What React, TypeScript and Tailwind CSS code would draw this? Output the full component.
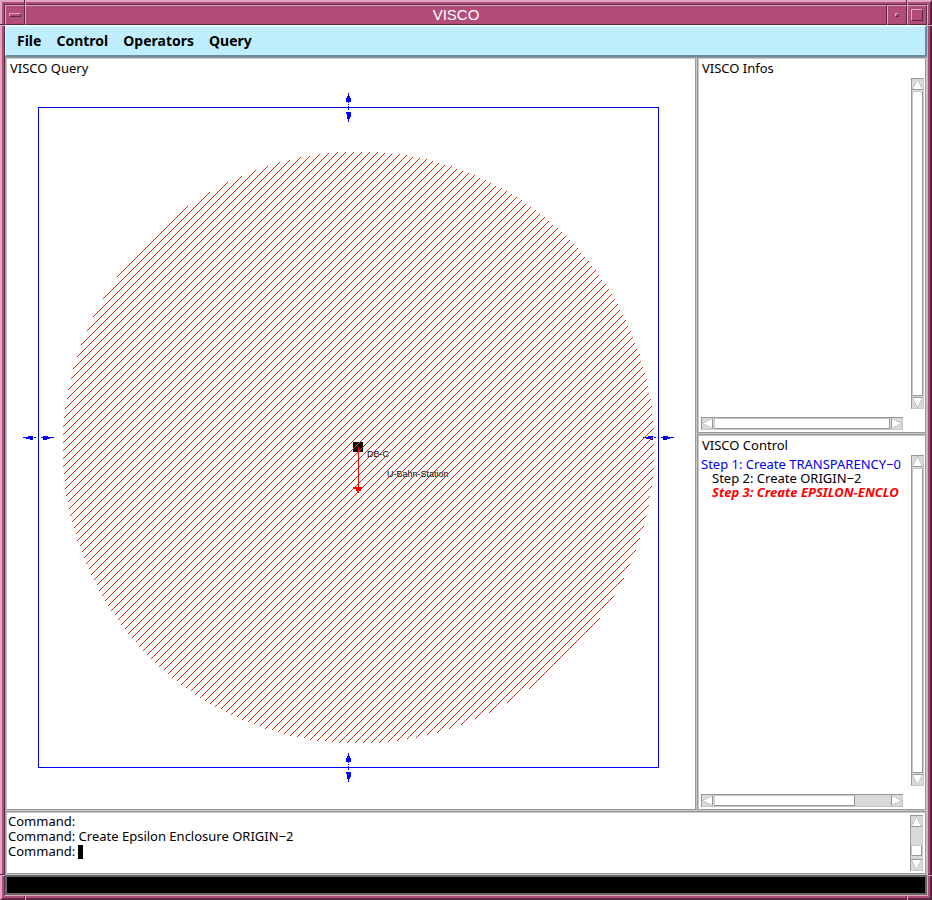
import React from "react";

type ThumbRange = { before: string; size: string };

function Arrow({ dir, label }: { dir: "up" | "down" | "left" | "right"; label: string }) {
  const rotate = { up: "", down: "rotate-180", left: "-rotate-90", right: "rotate-90" }[dir];
  return (
    <button type="button" aria-label={label} className="block size-[11px] shrink-0">
      <svg width="11" height="11" viewBox="0 0 11 11" className={rotate}>
        <path d="M5.5 0.5 L10.5 10.5 H0.5 Z" fill="#ffffff" stroke="#a3a3a3" strokeWidth="1" strokeDasharray="1 1" />
        <path d="M0.5 10.5 H10.5" stroke="#979797" />
      </svg>
    </button>
  );
}

function Scrollbar({ axis, label, thumb }: { axis: "x" | "y"; label: string; thumb: ThumbRange }) {
  const vertical = axis === "y";
  return (
    <div
      aria-label={label}
      className={`flex shrink-0 gap-px border border-t-[#979797] border-l-[#979797] border-r-[#c8c8c8] border-b-[#c8c8c8] bg-[#d9d9d9] ${
        vertical ? "w-[13px] flex-col" : "h-[13px] flex-row"
      }`}
    >
      <Arrow dir={vertical ? "up" : "left"} label={vertical ? "Scroll up" : "Scroll left"} />
      <div className={`flex min-h-0 min-w-0 flex-1 ${vertical ? "flex-col" : "flex-row"}`}>
        <div className={thumb.before} />
        <div
          className={`border border-t-[#c8c8c8] border-l-[#c8c8c8] border-r-[#979797] border-b-[#979797] bg-white ${thumb.size}`}
        />
      </div>
      <Arrow dir={vertical ? "down" : "right"} label={vertical ? "Scroll down" : "Scroll right"} />
    </div>
  );
}

function Pane({ className, children }: { className: string; children: React.ReactNode }) {
  return (
    <section
      className={`flex min-h-0 min-w-0 border border-t-[#979797] border-l-[#979797] border-r-[#c8c8c8] border-b-[#c8c8c8] ${className}`}
    >
      <div className="relative flex min-h-0 min-w-0 flex-1 flex-col border border-t-[#c8c8c8] border-l-[#c8c8c8] border-r-[#979797] border-b-[#979797] bg-white">
        {children}
      </div>
    </section>
  );
}

function PaneTitle({ children }: { children: React.ReactNode }) {
  return <h2 className="relative h-[19px] shrink-0 pl-[3px] text-[13px] leading-[19px]">{children}</h2>;
}

function SidePane({ title, thumb, children }: { title: string; thumb: ThumbRange; children?: React.ReactNode }) {
  return (
    <Pane className="flex-1">
      <PaneTitle>{title}</PaneTitle>
      <div className="flex min-h-0 flex-1 pr-px pl-[2px]">
        <div className="mr-2 min-w-0 flex-1 overflow-hidden">{children}</div>
        <Scrollbar axis="y" label={`${title} vertical`} thumb={{ before: "", size: "flex-1" }} />
      </div>
      <div className="mt-2 mr-[22px] mb-[2px] ml-[2px]">
        <Scrollbar axis="x" label={`${title} horizontal`} thumb={thumb} />
      </div>
    </Pane>
  );
}

const CX = 351;
const CY = 388;
const R = 295.4;

function hatchPath() {
  const parts: string[] = [];
  const reach = R * Math.SQRT2;
  for (let d = -Math.floor(reach); d <= reach; d += 1) {
    const c = CX + CY + d;
    if (c % 8 !== 7) continue;
    const half = Math.sqrt(Math.max(0, R * R - (d * d) / 2)) / Math.SQRT2;
    const mx = CX + d / 2;
    const x1 = Math.round(mx - half);
    const x2 = Math.round(mx + half);
    parts.push(`M${x1} ${c - x1 + 1}L${x2 + 1} ${c - x2}`);
  }
  return parts.join("");
}

const HATCH = hatchPath();

function VerticalHandle({ x, y }: { x: number; y: number }) {
  return (
    <path
      transform={`translate(${x} ${y})`}
      d="M2 0h1v10h-1zM1 3h3v2h-3zM0 5h5v4h-5zM2 11h1v1h-1zM2 13h1v4h-1zM0 19h5v2h-5zM1 21h4v3h-4zM1 24h3v2h-3zM2 26h1v3h-1z"
    />
  );
}

function HorizontalHandle({ x, y }: { x: number; y: number }) {
  return (
    <path
      transform={`translate(${x} ${y})`}
      d="M0 1h10v1h-10zM5 0h5v1h-5zM3 2h7v1h-7zM7 3h3v1h-3zM11 1h2v1h-2zM18 1h13v1h-13zM20 0h5v1h-5zM20 2h7v1h-7zM20 3h4v1h-4z"
    />
  );
}

function QueryCanvas() {
  return (
    <svg className="absolute inset-0 h-full w-full" shapeRendering="crispEdges" aria-label="Query drawing">
      <rect x="31.5" y="48.5" width="620" height="660" fill="none" stroke="#0000ee" />
      <g fill="#0000ff">
        <VerticalHandle x={339} y={34} />
        <VerticalHandle x={339} y={694} />
        <HorizontalHandle x={16} y={377} />
        <HorizontalHandle x={636} y={377} />
      </g>
      <rect x="346" y="383" width="10" height="10" fill="#000000" />
      <g fontFamily="'Liberation Sans', Arial, sans-serif" fontSize="9" fill="#000000">
        <text x="360" y="398">DB-C</text>
        <text x="380" y="418">U-Bahn-Station</text>
      </g>
      <path d={HATCH} stroke="#cc3300" fill="none" />
      <path d="M351 388h1v46h-1zM346 428h10v1h-10zM347 429h8v1h-8zM349 430h5v2h-5zM350 432h2v2h-2z" fill="#ff0000" />
    </svg>
  );
}

const MENU = ["File", "Control", "Operators", "Query"];

function FrameMarks() {
  const vertical = "absolute w-[2px] border-l border-l-[#5a2a43] bg-[#dfa8c0]";
  const horizontal = "absolute h-[2px] border-t border-t-[#5a2a43] bg-[#dfa8c0]";
  return (
    <div className="pointer-events-none absolute -inset-[2px]">
      <i className={`${vertical} top-0 left-6 h-[5px]`} />
      <i className={`${vertical} top-0 right-6 h-[5px]`} />
      <i className={`${vertical} bottom-0 left-6 h-[4px]`} />
      <i className={`${vertical} right-6 bottom-0 h-[4px]`} />
      <i className={`${horizontal} top-6 left-0 w-[5px]`} />
      <i className={`${horizontal} top-6 right-0 w-[4px]`} />
      <i className={`${horizontal} bottom-6 left-0 w-[5px]`} />
      <i className={`${horizontal} right-0 bottom-6 w-[4px]`} />
    </div>
  );
}

export default function App() {
  const bevel = "border border-t-[#dfa8c0] border-l-[#dfa8c0] border-r-[#5a2a43] border-b-[#5a2a43]";
  return (
    <div className="relative flex h-screen flex-col border-2 border-t-[#dfa8c0] border-r-[#5a2a43] border-b-[#5a2a43] border-l-[#dfa8c0] bg-[#b24d7a] p-[2px] font-['Noto_Sans',sans-serif] text-black">
      <div className="flex min-h-0 flex-1 flex-col border border-t-[#5a2a43] border-r-[#dfa8c0] border-b-[#dfa8c0] border-l-[#5a2a43]">
        <header className="flex h-5 shrink-0">
          <button type="button" aria-label="Window menu" className={`flex w-5 items-center justify-center ${bevel}`}>
            <span className={`h-[4px] w-3 ${bevel}`} />
          </button>
          <h1 className={`flex-1 text-center font-['Liberation_Sans',Arial,sans-serif] text-[15px] leading-[18px] font-medium text-white ${bevel}`}>
            VISCO
          </h1>
          <button type="button" aria-label="Minimize" className={`flex w-5 items-center justify-center ${bevel}`}>
            <span className={`size-[4px] ${bevel}`} />
          </button>
          <button type="button" aria-label="Maximize" className={`flex w-5 items-center justify-center ${bevel}`}>
            <span className={`size-3 ${bevel}`} />
          </button>
        </header>

        <nav className="flex h-8 shrink-0 items-center gap-[15px] border-t-2 border-r-2 border-b-2 border-l border-t-[#e4faff] border-r-[#6b8b96] border-b-[#6b8b96] border-l-[#e4faff] bg-[#bfefff] pl-[11px]">
          {MENU.map((item) => (
            <button key={item} type="button" className="text-[14px] leading-5 font-bold">
              {item}
            </button>
          ))}
        </nav>

        <main className="flex min-h-0 flex-1">
          <Pane className="flex-1">
            <QueryCanvas />
            <PaneTitle>VISCO Query</PaneTitle>
          </Pane>
          <div className="flex w-[230px] shrink-0 flex-col">
            <SidePane title="VISCO Infos" thumb={{ before: "", size: "flex-1" }} />
            <SidePane title="VISCO Control" thumb={{ before: "", size: "w-4/5" }}>
              <ol className="pt-[2px] text-[13px] leading-[14px] whitespace-nowrap">
                <li className="text-[#0000ee]">Step 1: Create TRANSPARENCY−0</li>
                <li className="pl-[11px]">Step 2: Create ORIGIN−2</li>
                <li className="pl-[11px] font-bold text-[#ff0000] italic">Step 3: Create EPSILON−ENCLO</li>
              </ol>
            </SidePane>
          </div>
        </main>

        <Pane className="h-16 shrink-0">
          <div className="flex min-h-0 flex-1 pt-[1px] pr-[2px] pb-[2px] pl-[1px]">
            <div className="min-w-0 flex-1 text-[13px] leading-[15px]">
              <p>Command:</p>
              <p>Command: Create Epsilon Enclosure ORIGIN−2</p>
              <div className="flex items-center">
                <label htmlFor="command">Command:</label>
                <span className="ml-[3px] h-[14px] w-[5px] bg-black" />
                <input id="command" type="text" className="h-[15px] min-w-0 flex-1 outline-none" />
              </div>
            </div>
            <div className="flex pt-px">
              <Scrollbar axis="y" label="Command history" thumb={{ before: "flex-1", size: "mb-[2px] h-[11px]" }} />
            </div>
          </div>
        </Pane>

        <div className="h-5 shrink-0 border-2 border-[#666666] bg-black" />
      </div>
      <FrameMarks />
    </div>
  );
}
